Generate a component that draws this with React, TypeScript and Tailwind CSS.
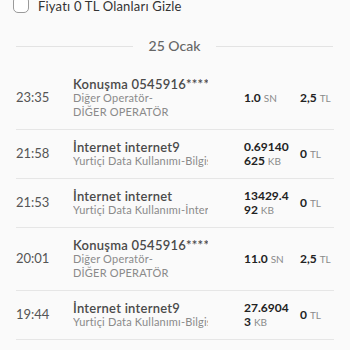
import React from "react";

type Row = {
  time: string;
  title: string;
  lines: string[];
  qty: string;
  unit: string;
  price: string;
};

const ROWS: Row[] = [
  { time: "23:35", title: "Konuşma 0545916****", lines: ["Diğer Operatör-", "DİĞER OPERATÖR"], qty: "1.0", unit: "SN", price: "2,5" },
  { time: "21:58", title: "İnternet internet9", lines: ["Yurtiçi Data Kullanımı-Bilgisayar"], qty: "0.69140625", unit: "KB", price: "0" },
  { time: "21:53", title: "İnternet internet", lines: ["Yurtiçi Data Kullanımı-İnternet"], qty: "13429.492", unit: "KB", price: "0" },
  { time: "20:01", title: "Konuşma 0545916****", lines: ["Diğer Operatör-", "DİĞER OPERATÖR"], qty: "11.0", unit: "SN", price: "2,5" },
  { time: "19:44", title: "İnternet internet9", lines: ["Yurtiçi Data Kullanımı-Bilgisayar"], qty: "27.69043", unit: "KB", price: "0" },
];

export default function App() {
  return (
    <div className="w-[350px] h-[350px] overflow-hidden bg-[#fafafa] font-['Lato','Noto_Sans',sans-serif]">
      <label className="flex h-[13px] items-end gap-[9px] pl-[13px]">
        <span className="block h-[17px] w-[16px] shrink-0 rounded-[5px] border-[1.5px] border-[#9a9a9a] bg-white" />
        <span className="text-[13px] leading-[13px] tracking-[0.2px] text-[#333]">Fiyatı 0 TL Olanları Gizle</span>
      </label>

      <div className="mt-[26px] flex items-center gap-4 pl-4 pr-[17px]">
        <div className="h-px flex-1 bg-[#e3e3e3]" />
        <span className="text-[14px] leading-[14px] font-medium text-[#666]">25 Ocak</span>
        <div className="h-px flex-1 bg-[#e3e3e3]" />
      </div>

      <div className="mt-[14px]">
        {ROWS.map((r, i) => (
          <div key={i} className="mx-4 flex items-center border-b border-[#e6e6e6] py-[10px]">
            <div className="w-[57px] shrink-0 text-[13px] text-[#555]">{r.time}</div>
            <div className="w-[135px] shrink-0 overflow-hidden whitespace-nowrap leading-[14px]">
              <div className="text-[13px] font-semibold tracking-[0.25px] text-[#4a4a4a]">{r.title}</div>
              {r.lines.map((l) => (
                <div key={l} className="text-[11px] tracking-[0.2px] text-[#8a8a8a]">
                  {l}
                </div>
              ))}
            </div>
            <div className="ml-[36px] w-[48px] shrink-0 break-all text-[12px] font-bold leading-[14px] text-[#222]">
              {r.qty} <span className="text-[10px] font-normal text-[#8a8a8a]">{r.unit}</span>
            </div>
            <div className="ml-[8px] text-[12px] font-bold text-[#222]">
              {r.price} <span className="text-[10px] font-normal text-[#8a8a8a]">TL</span>
            </div>
          </div>
        ))}
      </div>
    </div>
  );
}
